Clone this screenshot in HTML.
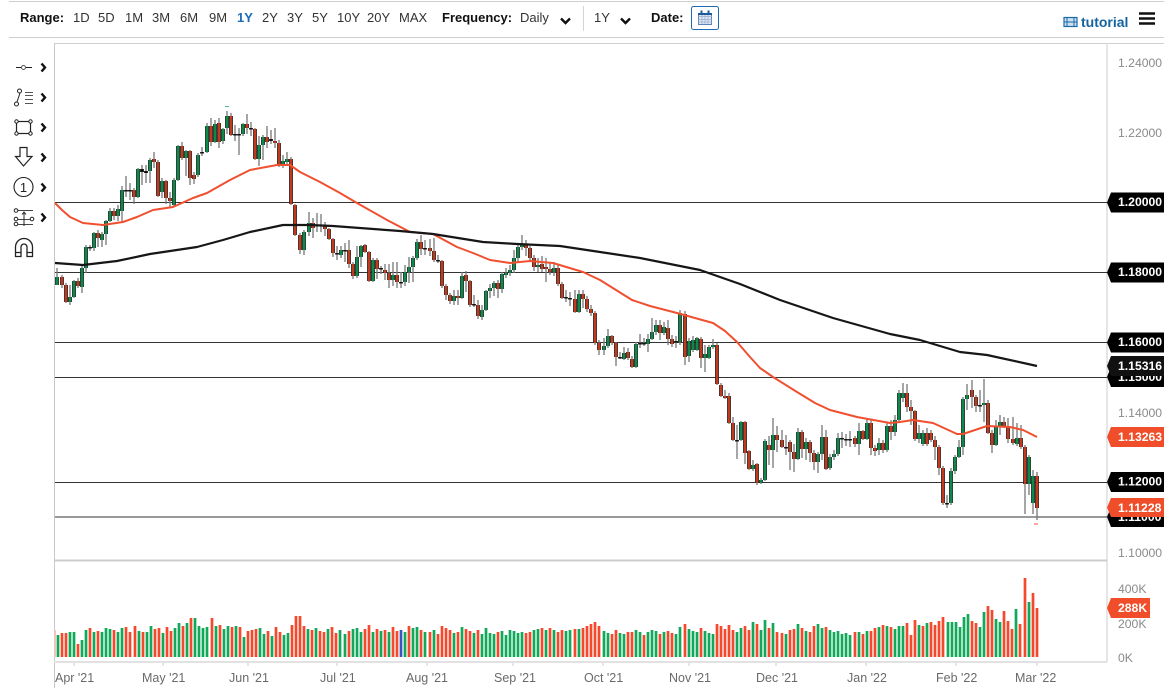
<!DOCTYPE html>
<html><head><meta charset="utf-8"><style>
html,body{margin:0;padding:0;background:#fff;width:1171px;height:697px;overflow:hidden}
body{position:relative;font-family:"Liberation Sans",sans-serif;color:#222}
.t{position:absolute;top:10px;font-size:13px;line-height:16px;white-space:nowrap;color:#333}
.b{font-weight:bold;color:#111}
svg{position:absolute;left:0;top:0}
</style></head><body>
<svg width="1171" height="697" viewBox="0 0 1171 697" style="filter:blur(.35px)">
<defs>
<path id="g" d="M57 277V285M70 297V302M74 281V297M82 268V287M86 247V268M94 233V248M102 234V240M106 221V234M110 211V221M118 209V216M122 190V211M138 169V197M150 160V171M162 181V192M174 180V205M178 146V180M186 151V158M198 155V175M207 126V152M215 124V142M223 129V141M227 116V128M243 124V134M259 145V159M263 137V145M283 161V165M287 159V162M304 232V250M309 223V232M341 250V255M357 257V276M361 246V257M373 260V281M393 275V280M405 272V282M409 267V272M413 258V267M417 242V258M454 296V301M462 276V298M482 310V317M486 291V310M490 288V291M494 283V288M502 274V289M506 273V275M510 270V273M514 258V270M518 247V258M522 244V247M538 265V267M554 268V272M579 294V312M604 346V350M608 336V346M624 353V359M636 344V367M648 339V344M652 332V339M656 325V332M664 327V333M680 313V342M689 341V356M693 340V350M697 338V350M705 354V358M709 347V358M713 345V347M741 422V440M753 465V469M761 480V483M765 441V480M773 435V450M798 432V459M806 442V449M818 454V462M822 437V454M830 457V468M834 454V457M838 438V454M859 431V444M867 423V439M879 443V450M887 426V450M895 420V432M899 393V420M903 393V398M919 433V439M923 433V444M951 471V503M955 457V471M959 447V457M963 399V447M967 395V399M984 403V405M996 427V445M1000 422V427M1017 438V444M1029 457V484M1033 476V503"/>
<path id="r" d="M62 277V285M66 285V302M78 281V286M98 233V238M114 211V216M134 190V197M154 159V162M158 162V196M166 181V198M170 198V201M182 146V158M190 151V178M194 175V179M211 126V142M219 123V142M231 116V135M247 124V128M255 129V159M267 137V142M275 141V143M279 143V164M291 159V204M295 205V235M300 235V250M313 223V228M325 226V229M329 229V239M333 239V253M349 250V264M353 264V276M365 245V252M369 252V281M377 260V269M385 270V273M389 273V280M397 275V282M421 242V249M430 248V251M434 251V260M442 261V286M446 286V295M450 295V301M458 296V298M466 275V281M470 281V305M478 305V316M498 283V289M526 244V248M530 248V258M534 258V267M542 264V269M546 267V269M550 269V272M558 268V284M562 284V298M575 299V312M583 294V299M587 299V309M591 309V313M595 313V343M599 343V350M612 336V343M616 343V357M628 352V358M632 359V367M660 325V333M668 328V339M672 339V344M685 314V357M701 339V358M717 345V384M721 385V396M725 396V398M729 396V423M733 423V440M745 422V453M749 451V469M757 464V483M769 445V450M777 435V440M782 440V447M790 442V452M794 452V459M802 432V449M810 442V453M814 453V462M826 437V469M855 438V444M863 431V439M871 423V448M875 448V451M883 443V450M891 426V432M907 393V407M911 407V411M915 411V439M927 433V444M931 433V440M935 440V447M939 447V468M943 468V503M972 390V397M976 397V406M988 403V433M992 433V445M1004 422V426M1008 426V439M1013 439V443M1021 438V447M1025 447V484M1037 476V508"/>
</defs>
<!-- frame -->
<path d="M9 1.5H1164M9 37.5H1164M54 43.5H1164" stroke="#cfcfcf" stroke-width="1" fill="none"/>
<path d="M583.5 6V31" stroke="#d4d4d4" stroke-width="1"/>
<path d="M54.500 43V688" stroke="#c8c8c8" stroke-width="1"/>
<path d="M1107 43V662" stroke="#dedede" stroke-width="1.500"/>
<path d="M54 560.500H1107" stroke="#cccccc" stroke-width="2"/>
<path d="M54 662H1107" stroke="#e2e2e2" stroke-width="2"/>
<path d="M74 662V666M163 662V666M248 662V666M337 662V666M427 662V666M513 662V666M603 662V666M689 662V666M776 662V666M866 662V666M956 662V666M1037 662V666" stroke="#dedede" stroke-width="1.500"/>
<!-- grid -->
<path d="M55 202.500H1107M55 272.500H1107M55 342.500H1107M55 377.500H1107M55 482.500H1107M55 517H1107" stroke="#333" stroke-width="1" fill="none"/>
<!-- wicks -->
<path fill="none" stroke="#777" stroke-width="1.300" d="M57 268V285M62 275V288M66 283V303M70 285V305M74 280V298M78 278V288M82 266V293M86 245V273M90 245V251M94 232V251M98 230V247M102 232V247M106 220V245M110 208V222M114 208V220M118 205V221M122 186V223M126 176V197M130 183V200M134 188V204M138 168V198M142 165V185M146 165V183M150 158V183M154 152V168M158 160V197M162 178V198M166 180V204M170 192V207M174 178V206M178 145V181M182 142V160M186 150V176M190 150V185M194 172V184M198 153V177M202 147V156M207 123V153M211 118V146M215 120V143M219 118V148M223 128V144M227 111V134M231 113V136M235 125V141M239 128V155M243 123V136M247 114V134M251 122V136M255 128V160M259 136V166M263 135V160M267 126V148M271 130V144M275 128V148M279 140V167M283 155V168M287 152V165M291 157V205M295 204V236M300 233V254M304 230V255M309 212V236M313 218V238M317 213V232M321 214V232M325 222V236M329 228V240M333 238V257M337 246V260M341 246V258M345 243V262M349 240V268M353 262V279M357 246V278M361 245V267M365 244V253M369 251V282M373 258V282M377 258V279M381 266V274M385 264V280M389 264V288M393 262V286M397 262V288M401 272V288M405 265V286M409 257V283M413 256V282M417 239V260M421 235V255M425 240V255M430 239V256M434 238V262M438 255V263M442 260V288M446 284V300M450 293V304M454 290V305M458 290V305M462 272V299M466 271V292M470 280V307M474 295V307M478 300V319M482 305V320M486 290V311M490 284V298M494 281V296M498 280V298M502 272V293M506 268V278M510 265V276M514 250V273M518 245V262M522 235V250M526 240V256M530 246V262M534 255V271M538 258V272M542 256V272M546 258V282M550 262V275M554 262V276M558 264V286M562 282V299M566 290V302M570 292V306M575 290V313M579 290V313M583 290V308M587 296V312M591 305V316M595 311V345M599 340V355M604 338V355M608 329V348M612 335V345M616 342V366M620 352V359M624 347V360M628 348V360M632 356V368M636 342V368M640 334V348M644 338V346M648 334V352M652 318V340M656 320V335M660 320V340M664 322V335M668 320V345M672 335V347M676 336V348M680 310V345M685 311V365M689 338V362M693 336V352M697 337V351M701 337V368M705 345V372M709 345V359M713 339V349M717 343V385M721 383V397M725 390V399M729 393V424M733 417V441M737 425V459M741 421V441M745 421V464M749 450V470M753 460V471M757 463V485M761 478V484M765 439V481M769 436V465M773 418V468M777 426V452M782 430V448M786 435V455M790 440V470M794 444V472M798 428V460M802 430V458M806 438V460M810 440V462M814 450V470M818 452V473M822 425V460M826 430V470M830 454V470M834 450V460M838 433V456M842 432V448M846 434V446M850 431V447M855 436V447M859 423V455M863 430V440M867 418V440M871 420V455M875 445V456M879 438V455M883 440V453M887 422V452M891 420V440M895 415V436M899 390V422M903 383V402M907 384V412M911 400V425M915 410V441M919 425V443M923 430V446M927 428V446M931 430V442M935 436V460M939 445V475M943 466V505M947 495V508M951 468V505M955 455V474M959 440V458M963 397V455M967 384V410M972 380V408M976 395V412M980 390V412M984 379V422M988 400V434M992 430V453M996 420V446M1000 415V435M1004 417V428M1008 418V443M1013 417V445M1017 423V446M1021 425V449M1025 445V514M1029 455V495M1033 470V514M1037 472V520"/>
<!-- candle bodies -->
<use href="#g" fill="none" stroke="#161616" stroke-width="3.800"/>
<use href="#r" fill="none" stroke="#161616" stroke-width="3.800"/>
<use href="#g" fill="none" stroke="#0b8a4a" stroke-width="2.400"/>
<use href="#r" fill="none" stroke="#c23a1e" stroke-width="2.400"/>
<path fill="none" stroke="#111" stroke-width="3.800" d="M90 247V248.500M126 190V191.500M130 190V191.500M142 169V172M146 171V173M202 152V153.500M235 134V135.500M239 134V135.500M251 128V129.500M271 139V141M317 225V226.500M321 225V226.500M337 253V254.500M345 250V251.500M381 268V269.500M401 282V283.500M425 248V249.500M438 260V261.500M474 304V305.500M566 297V298.500M570 298V299.500M620 357V358.500M640 343V344.500M644 343V344.500M676 341V342.500M737 440V441.500M786 447V448.500M842 438V439.500M846 439V440.500M850 439V440.500M947 503V504.500M980 405V406.500"/>
<!-- moving averages -->
<polyline fill="none" stroke="#f0502f" stroke-width="2" stroke-linejoin="round" points="55,203 62,210 70,217 83,223 103,225 123,222 137,217 153,210 173,207 193,198 207,193 230,180 250,170 277,165 290,165 300,172 320,182 340,193 357,203 387,220 410,232 433,234 457,247 473,253 490,260 510,263 530,261 553,263 583,272 600,280 632,300 650,306 677,313 713,323 725,331 737,342 750,357 760,368 773,377 797,392 815,403 830,410 857,417 890,423 900,422 913,420 933,423 957,434 963,434 987,426 1010,427 1023,430 1037,437"/>
<polyline fill="none" stroke="#161616" stroke-width="2.200" stroke-linejoin="round" points="55,263 83,265 117,261 150,254 197,247 223,240 250,232 283,225 310,225 333,226 400,231 433,234 483,242 517,244 560,246 600,252 640,258 700,270 740,284 780,300 833,318 890,334 920,340 960,352 987,355 1037,366"/>
<path d="M225 106.500h4" stroke="#4fc08d" stroke-width="1"/>
<path d="M1034 524h4" stroke="#f0502f" stroke-width="1"/>
<!-- volumes -->
<path d="M55 630V657" stroke="#f6c4ba" stroke-width="2"/>
<path fill="none" stroke="#10a95a" stroke-width="2.700" d="M58 635V657M70 632V657M74 632V657M82 640V657M86 630V657M94 632V657M102 632V657M106 628V657M110 629V657M118 632V657M122 628V657M139 631V657M147 632V657M151 626V657M163 633V657M175 628V657M179 623V657M187 623V657M195 618V657M199 626V657M203 628V657M207 627V657M216 626V657M224 629V657M228 626V657M236 626V657M244 637V657M260 628V657M264 634V657M272 636V657M284 635V657M288 633V657M308 629V657M316 628V657M328 629V657M340 630V657M345 634V657M353 629V657M357 628V657M361 632V657M373 632V657M381 631V657M389 632V657M405 632V657M413 628V657M417 627V657M425 632V657M434 630V657M454 633V657M462 627V657M474 633V657M482 634V657M486 628V657M490 633V657M494 634V657M502 631V657M506 635V657M510 630V657M514 631V657M518 633V657M522 632V657M534 630V657M538 629V657M546 630V657M554 630V657M566 631V657M570 630V657M579 629V657M604 631V657M608 633V657M620 633V657M624 634V657M636 630V657M640 632V657M648 632V657M652 630V657M656 631V657M664 632V657M676 634V657M680 627V657M689 629V657M693 631V657M697 632V657M705 631V657M709 633V657M713 634V657M737 632V657M741 628V657M753 622V657M761 630V657M765 620V657M773 623V657M786 634V657M798 624V657M806 631V657M818 624V657M822 628V657M830 630V657M834 632V657M838 631V657M842 634V657M846 633V657M850 635V657M859 632V657M867 631V657M879 627V657M887 626V657M895 629V657M899 626V657M903 626V657M919 625V657M927 623V657M948 622V657M952 622V657M956 622V657M960 627V657M964 617V657M968 614V657M980 627V657M984 612V657M996 619V657M1000 622V657M1016 609V657M1029 602V657"/>
<path fill="none" stroke="#f4492c" stroke-width="2.700" d="M62 633V657M66 633V657M78 644V657M90 628V657M98 631V657M114 630V657M126 627V657M130 632V657M135 626V657M143 632V657M155 629V657M159 628V657M167 627V657M171 631V657M183 626V657M191 618V657M212 618V657M220 625V657M232 627V657M240 627V657M248 631V657M252 630V657M256 629V657M268 631V657M276 627V657M280 632V657M292 625V657M296 616V657M300 616V657M304 626V657M312 630V657M320 631V657M324 632V657M332 627V657M336 633V657M349 631V657M365 629V657M369 625V657M377 629V657M385 630V657M393 627V657M397 631V657M409 626V657M421 630V657M430 632V657M438 634V657M442 626V657M446 628V657M450 630V657M458 632V657M466 629V657M470 631V657M478 630V657M498 632V657M526 633V657M530 632V657M542 628V657M550 628V657M558 632V657M562 630V657M575 629V657M583 628V657M587 626V657M591 624V657M595 622V657M599 626V657M612 634V657M616 630V657M628 632V657M632 632V657M644 635V657M660 634V657M668 631V657M672 633V657M685 624V657M701 628V657M717 624V657M721 626V657M725 629V657M729 625V657M733 630V657M745 626V657M749 630V657M757 624V657M769 628V657M777 632V657M782 633V657M790 630V657M794 629V657M802 628V657M810 632V657M814 626V657M826 627V657M855 632V657M863 634V657M871 631V657M875 628V657M883 625V657M891 627V657M907 623V657M911 635V657M915 620V657M923 626V657M931 622V657M935 625V657M939 621V657M943 617V657M972 621V657M976 623V657M988 606V657M992 610V657M1004 611V657M1008 621V657M1012 629V657M1020 624V657M1025 578V657M1033 593V657M1037 608V657"/>
<path d="M401 630V657" stroke="#3a55c8" stroke-width="2.700"/>
<!-- axis text -->
<g font-family="Liberation Sans,sans-serif" font-size="12.200" fill="#8a8a8a">
<text x="1118" y="67">1.24000</text><text x="1118" y="137">1.22000</text><text x="1118" y="417">1.14000</text><text x="1118" y="557">1.10000</text>
<text x="1118" y="593">400K</text><text x="1118" y="628">200K</text><text x="1118" y="662">0K</text>
</g>
<g font-family="Liberation Sans,sans-serif" font-size="12.500" fill="#6a6a6a">
<text x="55" y="682">Apr '21</text><text x="142" y="682">May '21</text><text x="229" y="682">Jun '21</text><text x="320" y="682">Jul '21</text><text x="406" y="682">Aug '21</text><text x="494" y="682">Sep '21</text><text x="584" y="682">Oct '21</text><text x="669" y="682">Nov '21</text><text x="756" y="682">Dec '21</text><text x="847" y="682">Jan '22</text><text x="936" y="682">Feb '22</text><text x="1015" y="682">Mar '22</text>
</g>
<!-- badges -->
<g font-family="Liberation Sans,sans-serif" font-size="12.200" font-weight="bold" fill="#fff">
<path d="M1107 202.500l4-10h53v20h-53z" fill="#000"/><text x="1118" y="206">1.20000</text>
<path d="M1107 272.500l4-10h53v20h-53z" fill="#000"/><text x="1118" y="276">1.18000</text>
<path d="M1107 342.500l4-10h53v20h-53z" fill="#000"/><text x="1118" y="346">1.16000</text>
<path d="M1107 377l4-10h53v20h-53z" fill="#000"/><text x="1118" y="381">1.15000</text>
<path d="M1107 366l4-10h53v20h-53z" fill="#111"/><text x="1118" y="370">1.15316</text>
<path d="M1107 437l4-10h53v20h-53z" fill="#f04e2a"/><text x="1118" y="441">1.13263</text>
<path d="M1107 482l4-10h53v20h-53z" fill="#000"/><text x="1118" y="485.500">1.12000</text>
<path d="M1107 517l4-10h53v20h-53z" fill="#000"/><text x="1118" y="521">1.11000</text>
<path d="M1107 507.500l4-9.500h53v19h-53z" fill="#f04e2a"/><text x="1118" y="512">1.11228</text>
<path d="M1107 608l4-10h39v20h-39z" fill="#f04e2a"/><text x="1118" y="612">288K</text>
</g>
<!-- left toolbar -->
<g fill="none" stroke="#222" stroke-width="1">
<path d="M16 67.500H21M26 67.500H32"/><circle cx="23.500" cy="67.500" r="2" stroke="#555"/>
<path d="M17 102L20 93"/><circle cx="16.500" cy="104" r="2"/><circle cx="19.500" cy="91" r="2"/><path d="M25 92.500H33M25 95.500H33M25 99.500H33M25 103.500H33" stroke="#555"/>
<rect x="16.500" y="121.500" stroke-width="1.200" width="14" height="12"/><g fill="#fff"><circle cx="16.500" cy="121.500" r="1.700"/><circle cx="30.500" cy="121.500" r="1.700"/><circle cx="16.500" cy="133.500" r="1.700"/><circle cx="30.500" cy="133.500" r="1.700"/></g>
<path stroke-width="1.200" d="M20 147.500H27V156.500H32L23.500 166L15.500 156.500H20Z"/>
<circle cx="23.500" cy="187" r="9.500" stroke-width="1.100"/>
<path d="M18 210.500H33M18 219.500H30M18 224.500H33" stroke="#444"/><path d="M24 212V226M22 214.500L24 212L26 214.500"/><circle cx="16" cy="210.500" r="1.800"/><circle cx="16" cy="219" r="1.800"/><circle cx="16" cy="224" r="1.800"/><circle cx="32" cy="219" r="1.800"/>
<path stroke-width="1.300" d="M15.500 256.500V247a8.500 8.500 0 0 1 17 0V256.500H27V247a3 3 0 0 0-6 0V256.500ZM15.500 252.500H21M27 252.500H32.500"/>
</g>
<text x="23.500" y="192" font-family="Liberation Sans,sans-serif" font-size="13" fill="#222" text-anchor="middle">1</text>
<path d="M41.500 63.500L45 67.500L41.500 71.500M41.500 93.500L45 97.500L41.500 101.500M41.500 123.500L45 127.500L41.500 131.500M41.500 153.500L45 157.500L41.500 161.500M41.500 183.500L45 187.500L41.500 191.500M41.500 213.500L45 217.500L41.500 221.500" fill="none" stroke="#111" stroke-width="2.400"/>
<!-- header icons -->
<path d="M561 18.500L565.500 23L570 18.500M621 18.500L625.500 23L630 18.500" fill="none" stroke="#111" stroke-width="2.400"/>
<rect x="691.500" y="6.500" width="27" height="23" rx="2" fill="#fff" stroke="#1c6ab5" stroke-width="1"/>
<rect x="698.500" y="13.500" width="13" height="11" fill="#dfe8f6" stroke="#5b83b8" stroke-width="1"/>
<path d="M698 16.500H712M698 19.500H712M698 22H712M702 14V24M705 14V24M708 14V24" stroke="#9aa9c8" stroke-width=".7"/>
<path d="M698 14H712" stroke="#1c5a9c" stroke-width="2"/><path d="M701.500 10.500V14M708.500 10.500V14" stroke="#1c5a9c" stroke-width="2"/>
<rect x="1064" y="17.500" width="13" height="9" fill="#cfe0f2" stroke="#1a6aa8" stroke-width="1.200"/><path d="M1067 17.500V26.500M1074 17.500V26.500M1064 22H1077" stroke="#1a6aa8" stroke-width="1"/>
<path d="M1139 13.500H1155M1139 18.500H1155M1139 23.500H1155" stroke="#111" stroke-width="2.500"/>
</svg>
<span class="t b" style="left:20px">Range:</span>
<span class="t" style="left:73px">1D</span><span class="t" style="left:98px">5D</span><span class="t" style="left:125px">1M</span><span class="t" style="left:152px">3M</span><span class="t" style="left:180px">6M</span><span class="t" style="left:209px">9M</span><span class="t" style="left:237px;color:#1c6ab5;font-weight:bold">1Y</span><span class="t" style="left:262px">2Y</span><span class="t" style="left:287px">3Y</span><span class="t" style="left:312px">5Y</span><span class="t" style="left:337px">10Y</span><span class="t" style="left:367px">20Y</span><span class="t" style="left:399px">MAX</span>
<span class="t b" style="left:442px">Frequency:</span><span class="t" style="left:520px">Daily</span><span class="t" style="left:594px">1Y</span><span class="t b" style="left:651px">Date:</span>
<span class="t" style="left:1081px;top:14px;font-weight:bold;font-size:14px;color:#14659f">tutorial</span>
</body></html>
